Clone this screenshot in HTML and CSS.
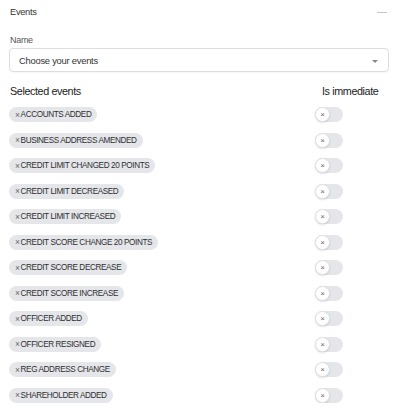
FILE: index.html
```html
<!DOCTYPE html>
<html>
<head>
<meta charset="utf-8">
<link rel="stylesheet" href="styles.css">
</head>
<body>
<div class="panel">
  <div class="panel-head">
    <span class="panel-title">Events</span>
    <span class="collapse"></span>
  </div>
  <div class="field">
    <div class="label">Name</div>
    <div class="select">
      <span>Choose your events</span>
      <span class="caret"></span>
    </div>
  </div>
  <div class="table">
    <div class="th">Selected events</div>
    <div class="th th-right">Is immediate</div>

    <div class="cell"><span class="chip"><span class="x">×</span>ACCOUNTS ADDED</span></div>
    <div class="cell"><span class="toggle"><span class="knob">×</span></span></div>

    <div class="cell"><span class="chip"><span class="x">×</span>BUSINESS ADDRESS AMENDED</span></div>
    <div class="cell"><span class="toggle"><span class="knob">×</span></span></div>

    <div class="cell"><span class="chip"><span class="x">×</span>CREDIT LIMIT CHANGED 20 POINTS</span></div>
    <div class="cell"><span class="toggle"><span class="knob">×</span></span></div>

    <div class="cell"><span class="chip"><span class="x">×</span>CREDIT LIMIT DECREASED</span></div>
    <div class="cell"><span class="toggle"><span class="knob">×</span></span></div>

    <div class="cell"><span class="chip"><span class="x">×</span>CREDIT LIMIT INCREASED</span></div>
    <div class="cell"><span class="toggle"><span class="knob">×</span></span></div>

    <div class="cell"><span class="chip"><span class="x">×</span>CREDIT SCORE CHANGE 20 POINTS</span></div>
    <div class="cell"><span class="toggle"><span class="knob">×</span></span></div>

    <div class="cell"><span class="chip"><span class="x">×</span>CREDIT SCORE DECREASE</span></div>
    <div class="cell"><span class="toggle"><span class="knob">×</span></span></div>

    <div class="cell"><span class="chip"><span class="x">×</span>CREDIT SCORE INCREASE</span></div>
    <div class="cell"><span class="toggle"><span class="knob">×</span></span></div>

    <div class="cell"><span class="chip"><span class="x">×</span>OFFICER ADDED</span></div>
    <div class="cell"><span class="toggle"><span class="knob">×</span></span></div>

    <div class="cell"><span class="chip"><span class="x">×</span>OFFICER RESIGNED</span></div>
    <div class="cell"><span class="toggle"><span class="knob">×</span></span></div>

    <div class="cell"><span class="chip"><span class="x">×</span>REG ADDRESS CHANGE</span></div>
    <div class="cell"><span class="toggle"><span class="knob">×</span></span></div>

    <div class="cell"><span class="chip"><span class="x">×</span>SHAREHOLDER ADDED</span></div>
    <div class="cell"><span class="toggle"><span class="knob">×</span></span></div>
  </div>
</div>
</body>
</html>
```

FILE: styles.css
```css
html, body {
  margin: 0;
  padding: 0;
  background: #ffffff;
}
body {
  font-family: "Liberation Sans", Arial, sans-serif;
  color: #333;
}
.panel {
  width: 380px;
  padding: 0 0 0 9px;
}
.panel-head {
  display: flex;
  justify-content: space-between;
  align-items: center;
  height: 24px;
  padding: 0 2px 0 1px;
}
.panel-title {
  font-size: 9.3px;
  letter-spacing: -0.3px;
  color: #333;
}
.collapse {
  width: 10px;
  height: 1px;
  background: #c4c4c4;
}
.field {
  padding-top: 8px;
}
.label {
  font-size: 9px;
  letter-spacing: -0.3px;
  color: #555;
  padding-left: 1px;
  height: 16px;
  line-height: 16px;
}
.select {
  box-sizing: border-box;
  height: 24px;
  border: 1px solid #dedede;
  border-radius: 4px;
  display: flex;
  justify-content: space-between;
  align-items: center;
  padding: 0 10px 0 9px;
  font-size: 9.4px;
  letter-spacing: -0.25px;
  color: #333;
  box-shadow: 0 1px 1px rgba(0,0,0,0.03);
}
.caret {
  width: 0;
  height: 0;
  border-left: 3px solid transparent;
  border-right: 3px solid transparent;
  border-top: 3px solid #888;
  margin-top: 2px;
}
.table {
  display: grid;
  grid-template-columns: 1fr 74px;
  margin-top: 11px;
  row-gap: 10.5px;
}
.th {
  font-size: 10.8px;
  letter-spacing: -0.4px;
  color: #222;
  padding-left: 1px;
  height: 16px;
  line-height: 16px;
  margin-bottom: -2.5px;
  white-space: nowrap;
}
.th-right {
  padding-left: 7px;
}
.cell {
  display: flex;
  align-items: center;
  height: 15px;
}
.chip {
  display: inline-flex;
  align-items: center;
  height: 15px;
  padding: 0 6px 0 6px;
  border-radius: 8px;
  background: #e5e6ea;
  font-size: 8.2px;
  letter-spacing: -0.4px;
  color: #2f2f2f;
  white-space: nowrap;
}
.x {
  font-size: 8.5px;
  color: #666;
  margin-right: 1px;
}
.toggle {
  position: relative;
  display: inline-block;
  width: 28px;
  height: 15px;
  border-radius: 8px;
  background: #e5e6ea;
}
.knob {
  position: absolute;
  left: 0;
  top: 0;
  box-sizing: border-box;
  width: 15px;
  height: 15px;
  border-radius: 50%;
  background: #fff;
  border: 1px solid #e0e0e0;
  box-shadow: 0 1px 2px rgba(0,0,0,0.12);
  font-size: 8px;
  line-height: 13px;
  text-align: center;
  color: #666;
}
```
